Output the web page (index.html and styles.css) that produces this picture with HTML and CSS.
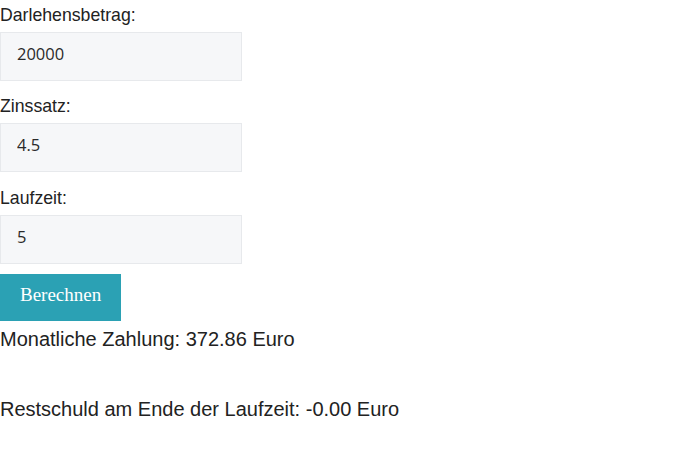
FILE: index.html
```html
<!DOCTYPE html>
<html lang="de">
<head>
    <meta charset="UTF-8">
    <meta name="viewport" content="width=device-width, initial-scale=1.0">
    <title>Kreditrechner</title>
    <link rel="stylesheet" href="styles.css">
</head>
<body>
    <form class="loan-form" onsubmit="return false;">
        <div class="field">
            <label for="amount">Darlehensbetrag:</label>
            <input type="text" id="amount" value="20000">
        </div>
        <div class="field">
            <label for="rate">Zinssatz:</label>
            <input type="text" id="rate" value="4.5">
        </div>
        <div class="field">
            <label for="years">Laufzeit:</label>
            <input type="text" id="years" value="5">
        </div>
        <button type="button" class="calc-btn">Berechnen</button>
    </form>

    <p class="result">Monatliche Zahlung: 372.86 Euro</p>
    <p class="result rest">Restschuld am Ende der Laufzeit: -0.00 Euro</p>
</body>
</html>
```

FILE: styles.css
```css
body {
    margin: 0;
    font-family: 'Liberation Sans', Arial, sans-serif;
    color: #222;
    background: #fff;
}
.loan-form {
    display: flex;
    flex-direction: column;
    align-items: flex-start;
}
.field {
    display: flex;
    flex-direction: column;
    margin-bottom: 10.5px;
}
.field label {
    padding-top: 5px;
    margin-bottom: 6.7px;
    font-size: 17.7px;
    line-height: 20.3px;
}
.field input {
    box-sizing: border-box;
    width: 242px;
    height: 49px;
    margin: 0;
    padding: 0 16px 6px;
    font-family: 'Open Sans', sans-serif;
    font-size: 16.5px;
    color: #2a2a2a;
    background: #f6f7f9;
    border: 1px solid #e7e9ec;
    border-radius: 0;
    outline: none;
}
.calc-btn {
    height: 47px;
    padding: 0 20px 5px;
    font-family: 'Liberation Serif', 'Times New Roman', serif;
    font-size: 19px;
    color: #fff;
    background: #2ba1b4;
    border: none;
    cursor: pointer;
}
.result {
    margin: 7px 0 0;
    font-size: 20px;
    line-height: 23px;
}
.result.rest {
    margin-top: 47px;
}
```
